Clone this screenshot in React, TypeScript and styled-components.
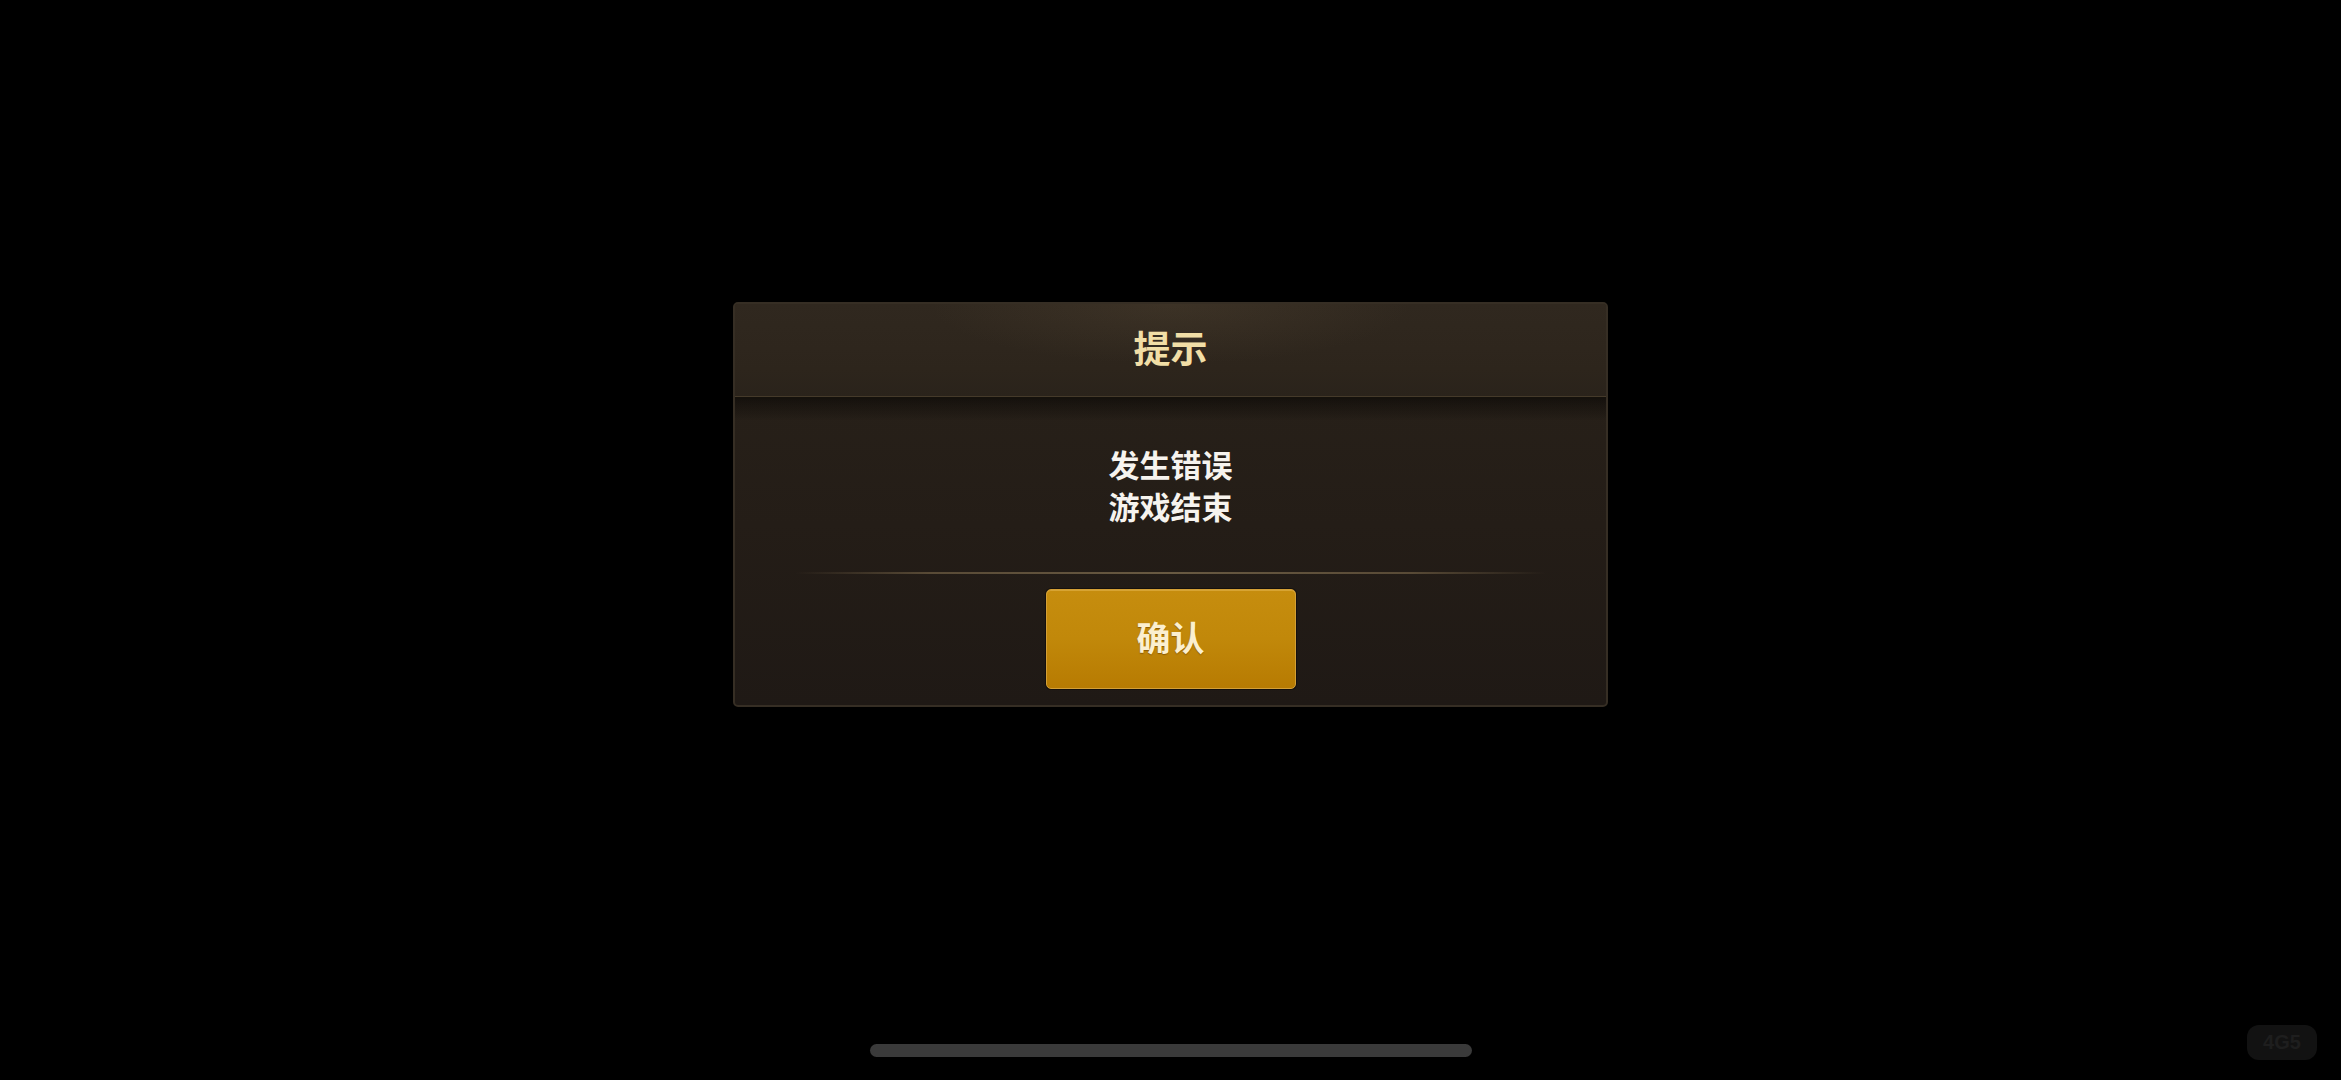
import React from "react";
import styled, { createGlobalStyle } from "styled-components";

const Global = createGlobalStyle`
  html, body { margin: 0; padding: 0; background: #000; }
  body { font-family: "Noto Sans CJK SC", "Noto Sans", sans-serif; }
  * { box-sizing: border-box; }
`;

const Screen = styled.div`
  position: relative;
  width: 2341px;
  height: 1080px;
  background: #000;
  display: flex;
  flex-direction: column;
  align-items: center;
  overflow: hidden;
`;

const Dialog = styled.div`
  margin-top: 302px;
  width: 875px;
  height: 405px;
  display: flex;
  flex-direction: column;
  border-radius: 5px;
  border: 2px solid #362e24;
  background: linear-gradient(180deg, #29221a 0%, #241d17 55%, #1f1915 100%);
  overflow: hidden;
`;

const Header = styled.div`
  height: 95px;
  flex: none;
  display: flex;
  align-items: center;
  justify-content: center;
  background:
    radial-gradient(ellipse 240px 60px at 50% 0%, rgba(110, 92, 66, 0.2), rgba(0, 0, 0, 0) 100%),
    linear-gradient(180deg, #30281f 0%, #2d251c 70%, #2a231b 100%);
  border-bottom: 2px solid #15110c;
  box-shadow: inset 0 -1px 0 rgba(110, 92, 66, 0.4);
`;

const Title = styled.div`
  color: #f1dea6;
  font-size: 37px;
  font-weight: 700;
  line-height: 1;
  margin-top: -6px;
`;

const Body = styled.div`
  height: 173px;
  flex: none;
  display: flex;
  flex-direction: column;
  align-items: center;
  justify-content: center;
  background: linear-gradient(180deg, rgba(8, 6, 4, 0.55) 0px, rgba(0, 0, 0, 0) 22px);
`;

const Message = styled.div`
  color: #f6f3ee;
  font-size: 31px;
  font-weight: 700;
  line-height: 42px;
  text-align: center;
  margin-top: -2px;
`;

const Divider = styled.div`
  height: 2px;
  flex: none;
  margin: 0 60px;
  background: linear-gradient(
    90deg,
    rgba(95, 80, 58, 0) 0%,
    rgba(95, 80, 58, 0.9) 18%,
    rgba(105, 90, 66, 1) 50%,
    rgba(95, 80, 58, 0.9) 82%,
    rgba(95, 80, 58, 0) 100%
  );
`;

const Footer = styled.div`
  flex: 1;
  display: flex;
  align-items: flex-start;
  justify-content: center;
  padding-top: 15px;
`;

const ConfirmButton = styled.button`
  width: 250px;
  height: 100px;
  border-radius: 5px;
  border: 1px solid #d49f36;
  background: linear-gradient(180deg, #c68d0e 0%, #c1880a 50%, #b77b02 100%);
  box-shadow: inset 0 1px 0 rgba(255, 220, 140, 0.3), 0 0 0 1px rgba(0, 0, 0, 0.4);
  color: #fbefcf;
  font-family: "Noto Sans CJK SC", "Noto Sans", sans-serif;
  font-size: 34px;
  font-weight: 700;
  line-height: 1;
  padding: 0 0 4px 0;
  cursor: pointer;
  text-shadow: 0 1px 1px rgba(90, 50, 0, 0.5);
`;

const HomeIndicator = styled.div`
  margin-top: auto;
  margin-bottom: 23px;
  width: 602px;
  height: 13px;
  border-radius: 7px;
  background: #3a3a3a;
`;

const Badge = styled.div`
  position: absolute;
  left: 2247px;
  top: 1025px;
  width: 70px;
  height: 35px;
  border-radius: 12px;
  background: #121212;
  color: #1e1e1e;
  font-family: "Liberation Sans", sans-serif;
  font-size: 20px;
  font-weight: 700;
  display: flex;
  align-items: center;
  justify-content: center;
`;

export default function App() {
  return (
    <>
      <Global />
      <Screen>
        <Dialog>
          <Header>
            <Title>提示</Title>
          </Header>
          <Body>
            <Message>
              发生错误
              <br />
              游戏结束
            </Message>
          </Body>
          <Divider />
          <Footer>
            <ConfirmButton>确认</ConfirmButton>
          </Footer>
        </Dialog>
        <HomeIndicator />
        <Badge>4G5</Badge>
      </Screen>
    </>
  );
}
